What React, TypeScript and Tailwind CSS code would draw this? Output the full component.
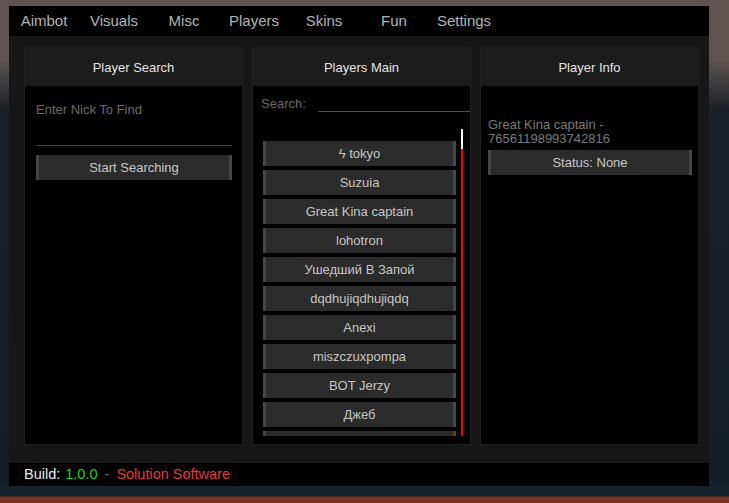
const tabs = ["Aimbot", "Visuals", "Misc", "Players", "Skins", "Fun", "Settings"];

const players = [
  "ϟ tokyo",
  "Suzuia",
  "Great Kina captain",
  "lohotron",
  "Ушедший В Запой",
  "dqdhujiqdhujiqdq",
  "Anexi",
  "miszczuxpompa",
  "BOT Jerzy",
  "Джеб",
  "",
];

function Panel({ title, children }: { title: string; children: React.ReactNode }) {
  return (
    <div className="flex h-[398px] flex-col border border-[#1f1f1f]">
      <div className="flex h-[38px] shrink-0 items-center justify-center bg-[#1c1c1c] pt-px text-[13px] text-[#e4e4e4]">
        {title}
      </div>
      <div className="flex-1 overflow-hidden bg-black">{children}</div>
    </div>
  );
}

function GrayButton({ label, className = "" }: { label: string; className?: string }) {
  return (
    <div
      className={`flex h-[25px] shrink-0 items-center justify-center border-x-[3px] border-[#464646] bg-[#2b2b2b] text-[13px] text-[#c6c6c6] ${className}`}
    >
      {label}
    </div>
  );
}

export default function App() {
  return (
    <div
      className="h-[503px] w-[729px] overflow-hidden bg-[linear-gradient(to_bottom,#5e5350_0px,#5e5350_60px,#1a2028_110px,#141c24_480px,#15212b_486px,#15212b_496px,#7b3527_497px)] pl-[9px] pt-[6px]"
      style={{ fontFamily: '"Liberation Sans", Arial, sans-serif' }}
    >
      <div className="flex w-[700px] flex-col">
        {/* tab bar */}
        <div className="flex h-[30px] items-center bg-black">
          {tabs.map((t) => (
            <div key={t} className="w-[70px] text-center text-[15px] text-[#b3b3b3]">
              {t}
            </div>
          ))}
        </div>

        {/* body */}
        <div className="grid grid-cols-[219px_219px_219px] gap-[9px] bg-[#171717] pb-[18px] pl-[15px] pr-[10px] pt-[11px]">
          <Panel title="Player Search">
            <div className="flex flex-col px-[11px]">
              <div className="mt-[16px] text-[13px] leading-[15px] text-[#6b6b6b]">Enter Nick To Find</div>
              <div className="mt-[28px] h-px w-[196px] bg-[#e00000]" />
              <GrayButton label="Start Searching" className="mt-[9px] w-[196px]" />
            </div>
          </Panel>

          <Panel title="Players Main">
            <div className="flex flex-col">
              <div className="mt-[10px] flex items-end">
                <span className="pl-[8px] text-[13px] leading-[15px] text-[#6b6b6b]">Search:</span>
                <div className="mb-[-1px] ml-[12px] h-px flex-1 bg-[#ff0000]" />
              </div>
              <div className="mt-[18px] flex h-[307px] pl-[10px]">
                <div className="flex w-[193px] flex-col gap-[4px] overflow-hidden pt-[12px]">
                  {players.map((p, i) => (
                    <GrayButton key={i} label={p} className="w-[193px]" />
                  ))}
                </div>
                <div className="ml-[5px] flex w-[2px] flex-col">
                  <div className="h-[20px] bg-white" />
                  <div className="flex-1 bg-[#ff0000]" />
                </div>
              </div>
            </div>
          </Panel>

          <Panel title="Player Info">
            <div className="flex flex-col px-[7px]">
              <div className="mt-[32px] text-[13px] leading-[14px] text-[#7a7a7a]">
                Great Kina captain -<br />
                76561198993742816
              </div>
              <GrayButton label="Status: None" className="mt-[4px] w-[204px]" />
            </div>
          </Panel>
        </div>

        {/* footer */}
        <div className="flex h-[23px] items-center bg-black pl-[15px] text-[14.5px]">
          <span className="text-[#e8e8e8]">Build:</span>
          <span className="ml-[5px] text-[#1ed41e]">1.0.0</span>
          <span className="mx-[7px] text-[#6a6a6a]">-</span>
          <span className="text-[#e8383c]">Solution Software</span>
        </div>
      </div>
    </div>
  );
}
